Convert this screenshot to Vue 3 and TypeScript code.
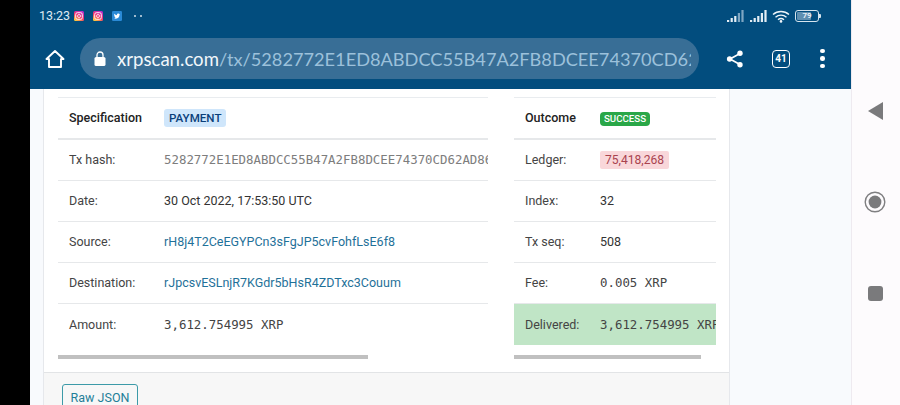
<script setup lang="ts">
interface Row { label: string; value: string; kind?: string }
const leftRows: Row[] = [
  { label: 'Tx hash:', value: '5282772E1ED8ABDCC55B47A2FB8DCEE74370CD62AD86F1A9', kind: 'hash' },
  { label: 'Date:', value: '30 Oct 2022, 17:53:50 UTC' },
  { label: 'Source:', value: 'rH8j4T2CeEGYPCn3sFgJP5cvFohfLsE6f8', kind: 'link' },
  { label: 'Destination:', value: 'rJpcsvESLnjR7KGdr5bHsR4ZDTxc3Couum', kind: 'link' },
  { label: 'Amount:', value: '3,612.754995 XRP', kind: 'mono' },
]
const rightRows: Row[] = [
  { label: 'Ledger:', value: '75,418,268', kind: 'ledger' },
  { label: 'Index:', value: '32' },
  { label: 'Tx seq:', value: '508' },
  { label: 'Fee:', value: '0.005 XRP', kind: 'mono' },
  { label: 'Delivered:', value: '3,612.754995 XRP', kind: 'mono' },
]
const wifiArcs = ['M1 5.5a12 12 0 0 1 16 0', 'M3.5 8.2a8.4 8.4 0 0 1 11 0', 'M6 10.8a4.6 4.6 0 0 1 6 0']
const signalBars = [2, 4, 6, 9, 12]
</script>

<template>
  <div class="screen">
    <div class="bezel"></div>
    <div class="browser">
      <header class="chrome">
        <div class="status">
          <span class="clock">13:23</span>
          <div class="notifs">
            <svg v-for="n in 2" :key="n" class="notif" viewBox="0 0 10 10">
              <defs>
                <linearGradient :id="'ig' + n" x1="0.2" y1="1" x2="0.8" y2="0">
                  <stop offset="0" stop-color="#ffd23a" />
                  <stop offset="0.45" stop-color="#f5356a" />
                  <stop offset="1" stop-color="#b92fd0" />
                </linearGradient>
              </defs>
              <rect width="10" height="10" rx="1.5" :fill="'url(#ig' + n + ')'" />
              <rect x="1.7" y="1.7" width="6.6" height="6.6" rx="1.7" fill="none" stroke="#fff" stroke-width="0.9" />
              <circle cx="5" cy="5" r="1.5" fill="none" stroke="#fff" stroke-width="0.8" />
            </svg>
            <svg class="notif" viewBox="0 0 10 10">
              <rect width="10" height="10" rx="1.2" fill="#2a8ad6" />
              <g transform="translate(1.4 1.4) scale(0.3)">
                <path fill="#fff" d="M22.46,6C21.69,6.35 20.86,6.58 20,6.69C20.88,6.16 21.56,5.32 21.88,4.31C21.05,4.81 20.13,5.16 19.16,5.36C18.37,4.5 17.26,4 16,4C13.65,4 11.73,5.92 11.73,8.29C11.73,8.63 11.77,8.96 11.84,9.27C8.28,9.09 5.11,7.38 3,4.79C2.63,5.42 2.42,6.16 2.42,6.94C2.42,8.43 3.17,9.75 4.33,10.5C3.62,10.5 2.96,10.3 2.38,10C2.38,10 2.38,10 2.38,10.03C2.38,12.11 3.86,13.85 5.82,14.24C5.46,14.34 5.08,14.39 4.69,14.39C4.42,14.39 4.15,14.36 3.89,14.31C4.43,16 6,17.26 7.89,17.29C6.43,18.45 4.58,19.13 2.56,19.13C2.22,19.13 1.88,19.11 1.54,19.07C3.44,20.29 5.7,21 8.12,21C16,21 20.33,14.46 20.33,8.79C20.33,8.6 20.33,8.42 20.32,8.23C21.16,7.63 21.88,6.87 22.46,6Z" />
              </g>
            </svg>
            <span class="more-dots"><i></i><i></i></span>
          </div>
          <div class="sys">
            <svg class="signal" viewBox="0 0 18 12">
              <rect v-for="(h, i) in signalBars" :key="i" :x="i * 3.6" :y="12 - h" width="2.2" :height="h" :fill="i > 2 ? '#7fa6c2' : '#e4eef5'" />
            </svg>
            <svg class="signal" viewBox="0 0 18 12">
              <rect v-for="(h, i) in signalBars" :key="i" :x="i * 3.6" :y="12 - h" width="2.2" :height="h" fill="#e4eef5" />
            </svg>
            <svg class="wifi" viewBox="0 0 18 14">
              <path v-for="d in wifiArcs" :key="d" :d="d" fill="none" stroke="#eef5fa" stroke-width="1.4" />
              <circle cx="9" cy="12.4" r="1.3" fill="#eef5fa" />
            </svg>
            <div class="battery"><span class="charge"></span><span class="pct">79</span></div>
            <span class="nub"></span>
          </div>
        </div>
        <div class="toolbar">
          <svg class="home" viewBox="0 0 20 20">
            <path d="M10 2 L18.5 10 H16 V18 H4 V10 H1.5 Z" fill="none" stroke="#fff" stroke-width="1.9" stroke-linejoin="round" />
          </svg>
          <div class="omnibox">
            <svg class="lock" viewBox="0 0 12 15">
              <path d="M3 6V4a3 3 0 0 1 6 0v2" fill="none" stroke="#fff" stroke-width="1.3" />
              <rect x="0.5" y="6" width="11" height="9" rx="1.6" fill="#fff" />
            </svg>
            <div class="url"><span class="host">xrpscan.com</span><span class="path">/tx/5282772E1ED8ABDCC55B47A2FB8DCEE74370CD62AD86</span></div>
          </div>
          <svg class="share" viewBox="0 0 18 18">
            <path d="M14 3.5 L4 9 L14 14.5" fill="none" stroke="#fff" stroke-width="1.7" />
            <circle cx="14" cy="3.3" r="2.7" fill="#fff" />
            <circle cx="3.6" cy="9" r="2.7" fill="#fff" />
            <circle cx="14" cy="14.7" r="2.7" fill="#fff" />
          </svg>
          <div class="tabs">41</div>
          <div class="menu"><i></i><i></i><i></i></div>
        </div>
      </header>

      <main class="page">
        <section class="card">
          <div class="card-body">
            <div class="col col-left">
              <div class="table">
                <div class="row head">
                  <span class="label">Specification</span>
                  <span class="value"><span class="payment">PAYMENT</span></span>
                </div>
                <div v-for="r in leftRows" :key="r.label" class="row">
                  <span class="label">{{ r.label }}</span>
                  <span class="value" :class="r.kind">{{ r.value }}</span>
                </div>
              </div>
              <div class="scrollbar scroll-left"></div>
            </div>
            <div class="col col-right">
              <div class="table">
                <div class="row head">
                  <span class="label">Outcome</span>
                  <span class="value"><span class="success">SUCCESS</span></span>
                </div>
                <div v-for="r in rightRows" :key="r.label" class="row" :class="{ delivered: r.label === 'Delivered:' }">
                  <span class="label">{{ r.label }}</span>
                  <span class="value" :class="r.kind === 'mono' ? 'mono' : ''">
                    <span v-if="r.kind === 'ledger'" class="ledger">{{ r.value }}</span>
                    <template v-else>{{ r.value }}</template>
                  </span>
                </div>
              </div>
              <div class="scrollbar scroll-right"></div>
            </div>
          </div>
          <footer class="card-foot">
            <button class="raw" type="button">Raw JSON</button>
          </footer>
        </section>
      </main>
    </div>
    <nav class="softkeys">
      <svg class="back" viewBox="0 0 15 18"><path d="M15 0 V18 L0 9 Z" fill="#7a7a7c" /></svg>
      <svg class="homekey" viewBox="0 0 22 22">
        <circle cx="11" cy="11" r="9.8" fill="none" stroke="#7f7f81" stroke-width="1.4" />
        <circle cx="11" cy="11" r="6.4" fill="#7a7a7c" />
      </svg>
      <span class="recent"></span>
    </nav>
  </div>
</template>

<style scoped>
.screen {
  display: flex;
  width: 900px;
  height: 405px;
  overflow: hidden;
  background: #000;
  font-family: Roboto, "Liberation Sans", sans-serif;
  color: #333;
}
.bezel { flex: 0 0 30px; background: #000; }
.browser {
  flex: 0 0 821px;
  display: flex;
  flex-direction: column;
  background: #f8fafd;
  overflow: hidden;
}
.chrome {
  flex: 0 0 89px;
  background: #024d7e;
  color: #fff;
  display: flex;
  flex-direction: column;
}
.status {
  display: flex;
  align-items: center;
  height: 31px;
  padding: 0 30px 0 9px;
}
.clock { font-size: 12.5px; color: #dfe9f1; width: 35px; }
.notifs { display: flex; align-items: center; gap: 9px; flex: 1; }
.notif { width: 10px; height: 10px; }
.more-dots { display: flex; gap: 4px; margin-left: 3px; }
.more-dots i { width: 2px; height: 2px; border-radius: 50%; background: #d3e0ea; }
.sys { display: flex; align-items: center; }
.signal { width: 18px; height: 12px; margin-right: 4.5px; }
.wifi { width: 18px; height: 14px; margin-right: 5px; }
.battery {
  position: relative;
  width: 24px;
  height: 12px;
  box-sizing: border-box;
  border: 1px solid #d6e4ee;
  border-radius: 3px;
  display: flex;
  padding: 1px;
}
.charge { width: 72%; background: #5f8fb0; border-radius: 1px; }
.pct {
  position: absolute;
  inset: 0;
  font-size: 8px;
  line-height: 10px;
  text-align: center;
  color: #e8f0f6;
  font-weight: 700;
}
.nub { width: 2px; height: 4px; background: #d6e4ee; border-radius: 0 1px 1px 0; }
.toolbar {
  display: flex;
  align-items: center;
  height: 41px;
  margin-top: 7px;
  padding-left: 15px;
}
.home { width: 20px; height: 20px; flex: none; }
.omnibox {
  flex: 0 0 619px;
  box-sizing: border-box;
  height: 41px;
  margin-left: 15px;
  border-radius: 21px;
  background: #386e96;
  display: flex;
  align-items: center;
  padding: 0 8px 0 14px;
  overflow: hidden;
}
.lock { width: 12px; height: 15px; flex: none; }
.url {
  margin-left: 11px;
  font-family: Lato, "Liberation Sans", sans-serif;
  white-space: nowrap;
  overflow: hidden;
  flex: 1;
}
.host { color: #f2f7fb; font-size: 18.6px; }
.path { color: #9cc1db; font-size: 18.2px; }
.share { width: 18px; height: 18px; margin-left: 27px; flex: none; }
.tabs {
  width: 18px;
  height: 18px;
  margin-left: 28px;
  flex: none;
  box-sizing: border-box;
  border: 1.6px solid #fff;
  border-radius: 4px;
  font-size: 10px;
  font-weight: 700;
  line-height: 15px;
  text-align: center;
}
.menu {
  margin-left: 30px;
  display: flex;
  flex-direction: column;
  gap: 3px;
}
.menu i { width: 4.5px; height: 4.5px; border-radius: 50%; background: #fff; }
.page {
  flex: 1;
  padding-left: 14px;
  min-height: 0;
}
.card {
  width: 686px;
  height: 340px;
  box-sizing: border-box;
  background: #fff;
  border-right: 1px solid #e6e8ec;
  box-shadow: -1px 0 0 #e6e8ec;
  display: flex;
  flex-direction: column;
}
.card-body {
  flex: 0 0 284px;
  display: flex;
  padding: 8px 13px 0 14px;
  gap: 26px;
  box-sizing: border-box;
  border-bottom: 1px solid #e2e4e6;
}
.col { overflow: hidden; }
.col-left { flex: 0 0 430px; }
.col-right { flex: 0 0 202px; }
.table { border-top: 1px solid #e9ecef; }
.row {
  display: flex;
  align-items: center;
  height: 41px;
  box-sizing: border-box;
  padding-bottom: 1px;
  border-bottom: 1px solid #e6e8ea;
  font-size: 12.5px;
  white-space: nowrap;
  overflow: hidden;
}
.row.head { height: 42px; border-bottom: 2px solid #e6e8ea; font-weight: 500; color: #222; }
.row:last-child { border-bottom: none; }
.col-left .label { flex: 0 0 95px; padding-left: 11px; }
.col-right .label { flex: 0 0 75px; padding-left: 11px; }
.label { color: #444; }
.head .label { color: #222; }
.value { color: #333; }
.mono, .hash {
  font-family: "DejaVu Sans Mono", "Liberation Mono", monospace;
  font-size: 12.4px;
  color: #444;
}
.hash { color: #7d7d7d; }
.link { color: #1f7199; }
.payment {
  display: inline-block;
  background: #cfe6fb;
  color: #0a3f7a;
  font-size: 11.6px;
  font-weight: 500;
  line-height: 18px;
  padding: 0 5px;
  border-radius: 3px;
}
.success {
  display: inline-block;
  background: #2aa748;
  color: #fff;
  font-size: 9.7px;
  font-weight: 500;
  line-height: 14px;
  padding: 0 4px;
  border-radius: 4px;
}
.ledger {
  display: inline-block;
  background: #f9d7da;
  color: #a9434f;
  font-size: 12.1px;
  line-height: 18px;
  padding: 0 5px;
  border-radius: 2px;
}
.delivered { background: #c0e5c6; height: 41px; }
.scrollbar { height: 4px; background: #c0c0c0; margin-top: 10px; }
.scroll-left { width: 310px; }
.scroll-right { width: 187px; }
.card-foot {
  flex: 1;
  background: #f7f7f7;
  padding: 11px 0 0 18px;
}
.raw {
  display: block;
  width: 76px;
  height: 30px;
  box-sizing: border-box;
  border: 1px solid #3c9aa8;
  border-radius: 3px;
  background: transparent;
  color: #1f7f99;
  font-family: Roboto, "Liberation Sans", sans-serif;
  font-size: 12.5px;
  padding: 0 0 4px;
}
.softkeys {
  flex: 0 0 49px;
  box-sizing: border-box;
  background: #fdfbfd;
  border-left: 1px solid #eeeaf0;
  display: flex;
  flex-direction: column;
  align-items: center;
  padding: 102px 2px 0 0;
}
.back { width: 15px; height: 18px; }
.homekey { width: 22px; height: 22px; margin-top: 71px; }
.recent { width: 15px; height: 15px; border-radius: 3px; background: #7a7a7c; margin-top: 73px; }
</style>

<style>
html, body { margin: 0; background: #000; overflow: hidden; }
</style>
